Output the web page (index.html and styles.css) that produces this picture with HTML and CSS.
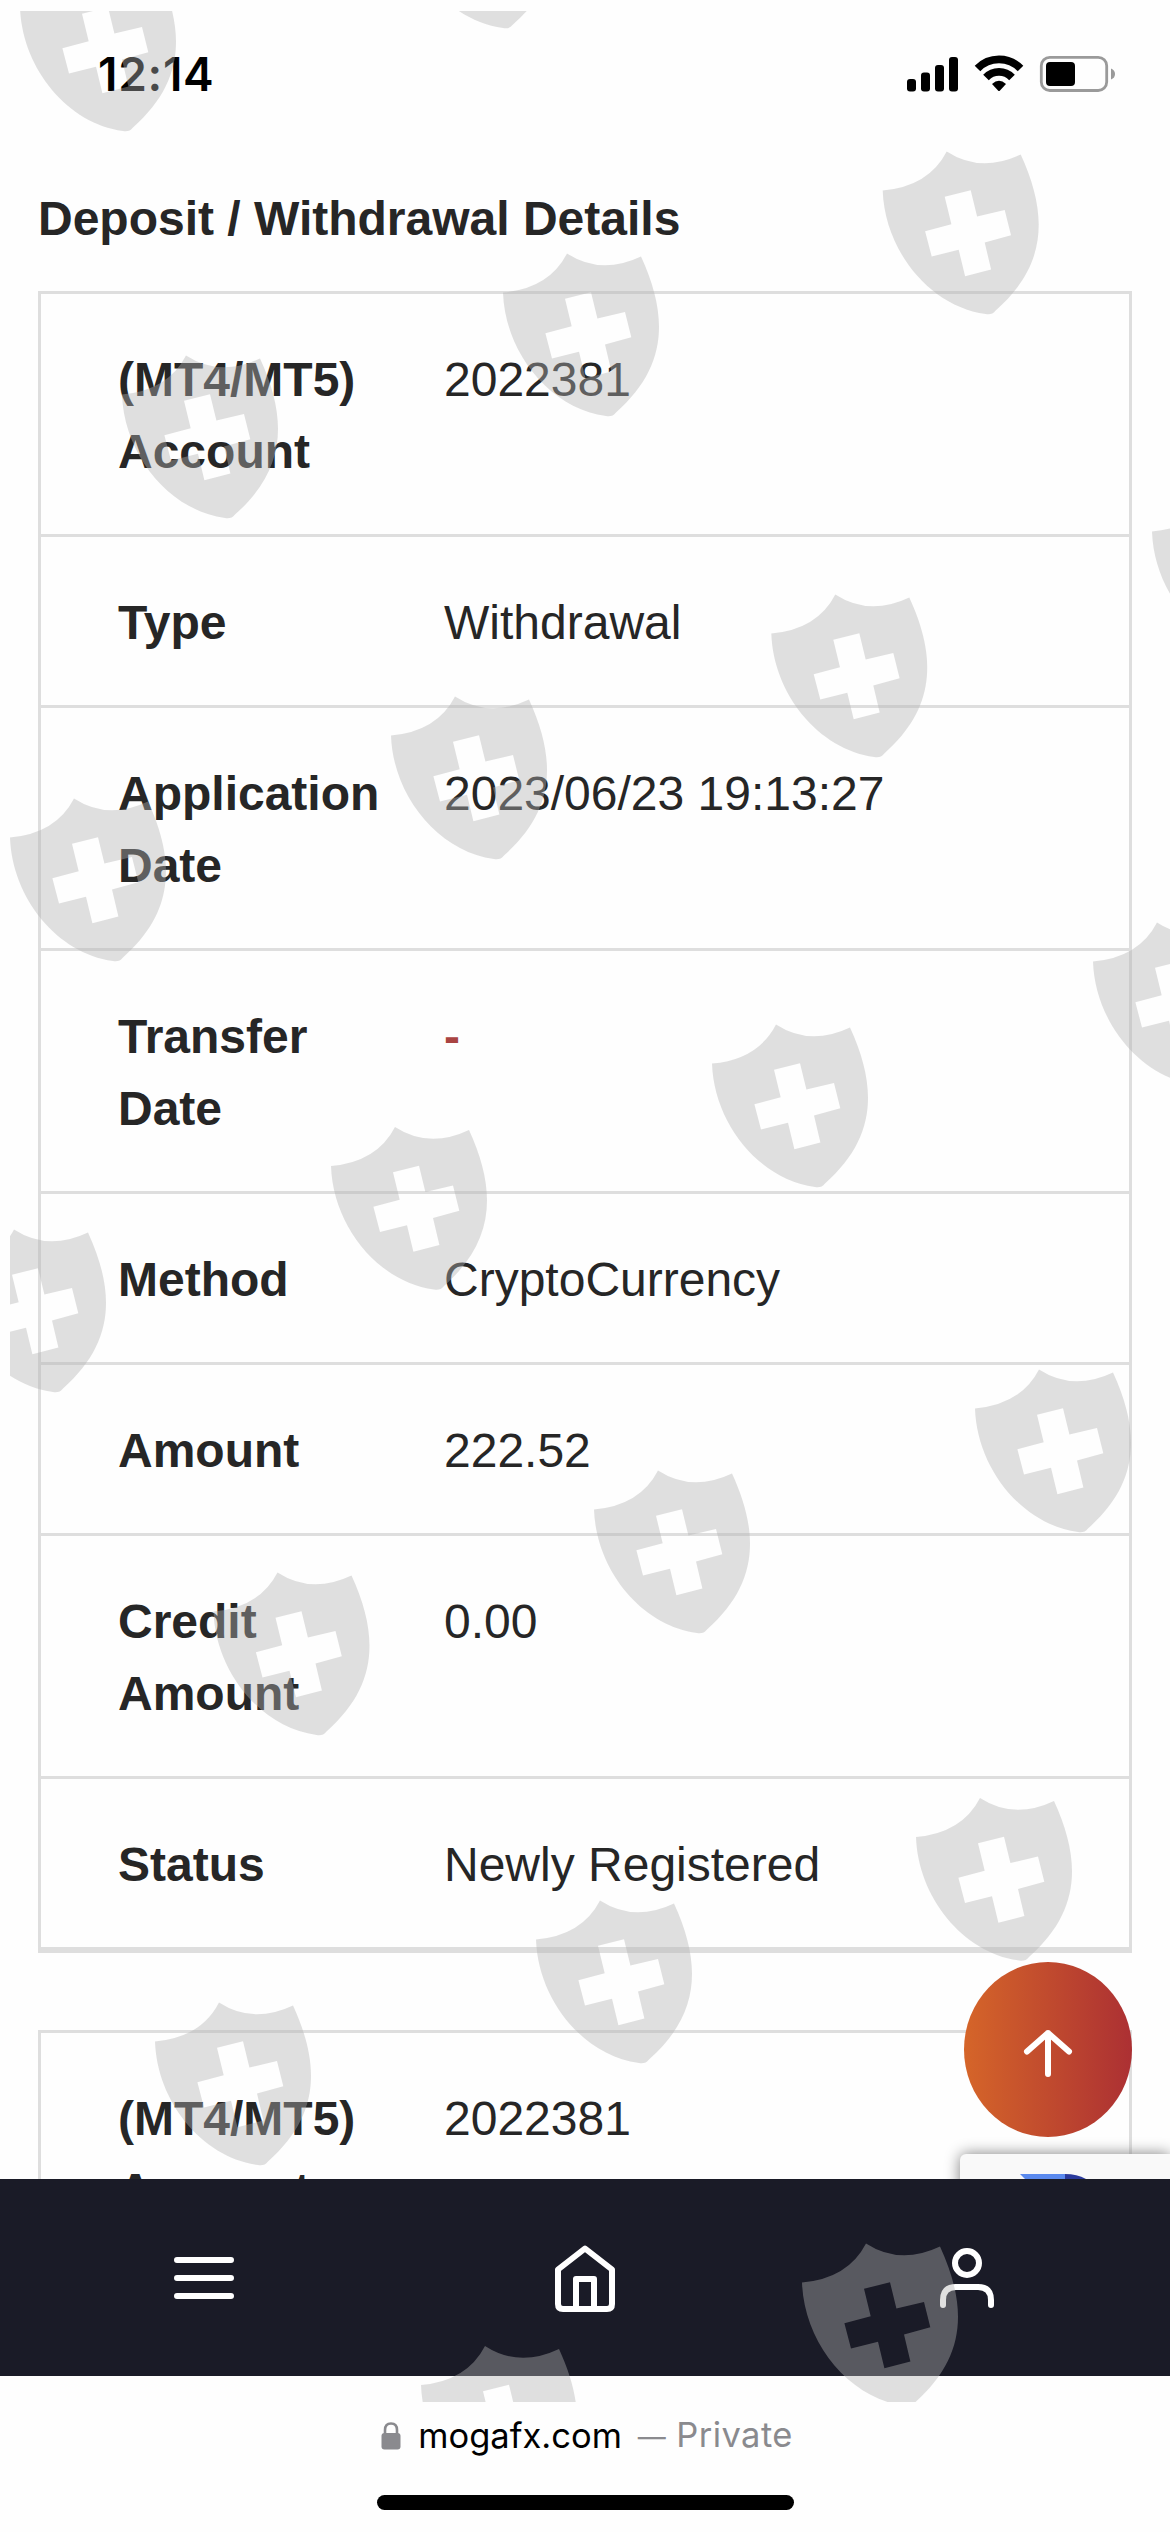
FILE: index.html
```html
<!DOCTYPE html>
<html lang="en">
<head>
<meta charset="utf-8">
<title>Deposit / Withdrawal Details</title>
<link rel="stylesheet" href="styles.css">
</head>
<body>
<div class="screen">
  <header class="status-bar">
    <span class="time">12:14</span>
    <svg class="status-icons" width="210" height="38" viewBox="906 54 210 38">
      <rect x="907" y="79" width="9" height="12.5" rx="3"/>
      <rect x="921" y="72.5" width="9" height="19" rx="3"/>
      <rect x="935" y="65" width="9" height="26.5" rx="3"/>
      <rect x="949" y="57" width="9" height="34.5" rx="3"/>
      <g fill="none" stroke="#000" stroke-width="7.800">
        <path d="M977.500 68.500A30 30 0 0 1 1020.500 68.500"/>
        <path d="M986 77.500A18 18 0 0 1 1012 77.500"/>
      </g>
      <path d="M992 84Q999 77.500 1006 84L1000 90.500Q999 91.500 998 90.500Z"/>
      <rect x="1041.300" y="57.300" width="65.400" height="33.200" rx="8.500" fill="none" stroke="#9a9a9a" stroke-width="2.800"/>
      <rect x="1046" y="62" width="29" height="24" rx="4"/>
      <path d="M1111 68.500Q1115 70 1115 74T1111 79.500Z" fill="#9a9a9a"/>
    </svg>
  </header>

  <main class="content">
    <h1 class="title">Deposit / Withdrawal Details</h1>
    <dl class="record">
      <div class="row"><dt>(MT4/MT5) Account</dt><dd>2022381</dd></div>
      <div class="row"><dt>Type</dt><dd>Withdrawal</dd></div>
      <div class="row"><dt>Application Date</dt><dd>2023/06/23 19:13:27</dd></div>
      <div class="row"><dt>Transfer Date</dt><dd class="empty">-</dd></div>
      <div class="row"><dt>Method</dt><dd>CryptoCurrency</dd></div>
      <div class="row"><dt>Amount</dt><dd>222.52</dd></div>
      <div class="row"><dt>Credit Amount</dt><dd>0.00</dd></div>
      <div class="row"><dt>Status</dt><dd>Newly Registered</dd></div>
    </dl>
    <dl class="record">
      <div class="row"><dt>(MT4/MT5) Account</dt><dd>2022381</dd></div>
    </dl>
    <div class="captcha">
      <svg width="70" height="7" viewBox="0 0 70 7"><path fill="#5b8aee" d="M0 2H45V7H5Z"/><path fill="#2a3a9c" d="M45 2Q57 2 66 7H45Z"/></svg>
    </div>
    <button class="to-top" aria-label="Back to top">
      <svg width="54" height="54" viewBox="0 0 54 54" fill="none" stroke="#fff" stroke-width="6" stroke-linecap="round" stroke-linejoin="round"><path d="M27 48V7M6 25.500 27 7 48 25.500"/></svg>
    </button>
  </main>

  <nav class="tabs">
    <svg width="60" height="42" viewBox="0 0 60 42" stroke="#fff" stroke-width="6" stroke-linecap="round"><path d="M3 3H57M3 21H57M3 39H57"/></svg>
    <svg class="home" width="60" height="68" viewBox="555 2243 60 68" fill="none" stroke="#fff" stroke-width="6" stroke-linejoin="round"><path d="M558 2268.500 585 2247.500 612 2268.500V2303Q612 2308 607 2308H563Q558 2308 558 2303ZM576 2308V2278H594V2308"/></svg>
    <svg class="user" width="56" height="62" viewBox="938 2247 56 62" fill="none" stroke="#fff" stroke-width="6" stroke-linecap="round"><circle cx="966" cy="2263" r="12"/><path d="M942 2305V2300Q942 2287 955 2287H977Q990 2287 990 2300V2305"/></svg>
  </nav>

  <footer class="browser-bar">
    <div class="address">
      <svg width="20" height="28" viewBox="0 0 20 28"><rect x="0.500" y="11" width="19" height="16.500" rx="3" fill="#8a8a8e"/><path d="M4 12V8Q4 1.500 10 1.500T16 8V12" fill="none" stroke="#8a8a8e" stroke-width="2.600"/></svg>
      <span class="host">mogafx.com</span><span class="mode"><span class="dash">—</span> Private</span>
    </div>
    <div class="home-indicator"></div>
  </footer>

  <svg class="watermark" viewBox="10 10.500 1160 2391.500" aria-hidden="true">
    <defs>
      <path id="shield" fill-rule="evenodd" d="M0 0Q46-4 64-39Q98-17 138-36C166 25 164 75 113 120Q109 125 103 123.500C47 116 2 60 0 0ZM62 6.300 88-.3 94.400 26 122 19.600 128.300 44.700 102 52 108.400 79 82.400 85.700 76 59.300 49 66 42.400 40.700 68.700 33.700Z"/>
    </defs>
    <use href="#shield" x="20" y="7"/>
    <use href="#shield" x="400" y="-96"/>
    <use href="#shield" x="882.700" y="190"/>
    <use href="#shield" x="503" y="292"/>
    <use href="#shield" x="122" y="394"/>
    <use href="#shield" x="1152" y="531"/>
    <use href="#shield" x="771.300" y="633"/>
    <use href="#shield" x="391" y="735"/>
    <use href="#shield" x="10" y="837"/>
    <use href="#shield" x="1093" y="961"/>
    <use href="#shield" x="712" y="1063"/>
    <use href="#shield" x="331" y="1165.500"/>
    <use href="#shield" x="-50" y="1268"/>
    <use href="#shield" x="975" y="1408"/>
    <use href="#shield" x="594" y="1509"/>
    <use href="#shield" x="213.500" y="1611"/>
    <use href="#shield" x="916" y="1836.500"/>
    <use href="#shield" x="536" y="1939"/>
    <use href="#shield" x="155" y="2041"/>
    <use href="#shield" x="802" y="2282"/>
    <use href="#shield" x="421" y="2384.500"/>
  </svg>
</div>
</body>
</html>
```

FILE: styles.css
```css
* { box-sizing: border-box; margin: 0; padding: 0; }
body { background: #fefefe; color: #262626; }

.screen {
  position: relative;
  display: flex;
  flex-direction: column;
  width: 1170px;
  height: 2532px;
  overflow: hidden;
  background: #fefefe;
  font-family: "Liberation Sans", Arial, sans-serif;
  font-size: 48px;
  line-height: 72px;
}

.status-bar {
  display: flex;
  justify-content: space-between;
  align-items: flex-start;
  flex: none;
  height: 141px;
  padding: 54px 54px 0 98px;
  color: #000;
}
.time {
  font: 600 46px/40px Inter, sans-serif;
  letter-spacing: .7px;
}

.content {
  position: relative;
  height: 2038px;
  padding: 42px 38px 0;
  overflow: hidden;
}
.title { font-size: 48px; font-weight: 700; line-height: 72px; }

.record {
  margin-top: 36px;
  border: 3px solid #dedede;
}
.record + .record { margin-top: 77px; }
.row {
  display: grid;
  grid-template-columns: 278px 1fr;
  column-gap: 48px;
  padding: 50px 77px 46px;
  border-bottom: 3px solid #dedede;
}
dt { font-weight: 700; }
.empty { color: #a94442; font-weight: 700; }

.to-top {
  position: absolute;
  right: 38px;
  top: 1821px;
  display: flex;
  align-items: center;
  justify-content: center;
  width: 168px;
  height: 175px;
  padding-top: 6px;
  border: 0;
  border-radius: 50%;
  background: linear-gradient(90deg, #d56529, #ac3033);
}
.captcha {
  position: absolute;
  right: 0;
  top: 2013px;
  width: 210px;
  height: 180px;
  padding: 18px 0 0 60px;
  border-radius: 6px 0 0 6px;
  background: #f9f9f9;
  box-shadow: 0 0 15px #808080;
}
.captcha svg { display: block; }

.tabs {
  flex: none;
  display: grid;
  grid-template-columns: 407px 356px 407px;
  justify-items: center;
  align-items: start;
  height: 197px;
  padding-top: 65px;
  background: #1a1b27;
}
.tabs svg:first-child { margin-top: 13px; }
.user { margin-top: 3px; }

.browser-bar {
  display: flex;
  flex-direction: column;
  align-items: center;
  padding-top: 37px;
}
.address {
  display: flex;
  align-items: center;
  margin-left: 4px;
  font: 400 34.500px/44px Inter, sans-serif;
  color: #000;
}
.host { margin-left: 17px; }
.mode { margin-left: 16px; color: #8a8a8e; letter-spacing: .4px; }
.dash { font-size: 28px; }
.home-indicator {
  width: 417px;
  height: 15px;
  margin-top: 36px;
  border-radius: 8px;
  background: #000;
}

.watermark {
  position: absolute;
  left: 10px;
  top: 10.500px;
  width: 1160px;
  height: 2391.500px;
  overflow: hidden;
  fill: rgba(179, 179, 179, .406);
  pointer-events: none;
}
```
